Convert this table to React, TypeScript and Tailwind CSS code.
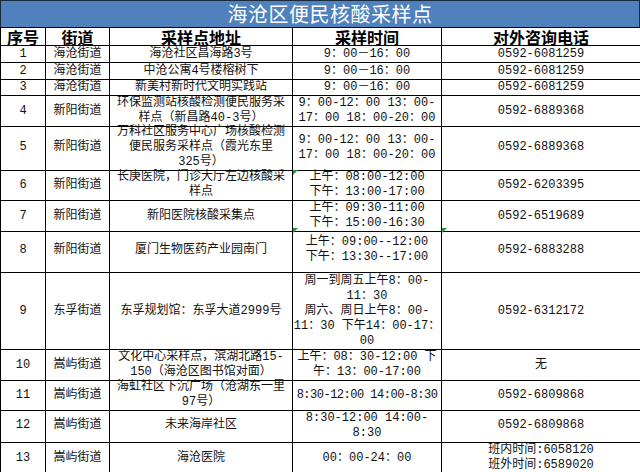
import React from 'react';

type Row = {
  no: string;
  street: string;
  addr: string[];
  time: string[];
  phone: string[];
  h: string;
  mark?: boolean;
  markPhone?: boolean;
  tight?: boolean;
};

const rows: Row[] = [
  { no: '1', street: '海沧街道', addr: ['海沧社区昌海路3号'], time: ['9：00－16：00'], phone: ['0592-6081259'], h: 'h-[17px]' },
  { no: '2', street: '海沧街道', addr: ['中沧公寓4号楼榕树下'], time: ['9：00－16：00'], phone: ['0592-6081259'], h: 'h-[17px]' },
  { no: '3', street: '海沧街道', addr: ['新美村新时代文明实践站'], time: ['9：00－16：00'], phone: ['0592-6081259'], h: 'h-[16px]' },
  { no: '4', street: '新阳街道', addr: ['环保监测站核酸检测便民服务采', '样点（新昌路40-3号）'], time: ['9：00-12：00 13：00-', '17：00 18：00-20：00'], phone: ['0592-6889368'], h: 'h-[29px]' },
  { no: '5', street: '新阳街道', addr: ['万科社区服务中心广场核酸检测', '便民服务采样点（霞光东里', '325号）'], time: ['9：00-12：00 13：00-', '17：00 18：00-20：00'], phone: ['0592-6889368'], h: 'h-[45px]' },
  { no: '6', street: '新阳街道', addr: ['长庚医院，门诊大厅左边核酸采', '样点'], time: ['上午：08:00-12:00', '下午：13:00-17:00'], phone: ['0592-6203395'], h: 'h-[31px]', mark: true },
  { no: '7', street: '新阳街道', addr: ['新阳医院核酸采集点'], time: ['上午：09:30-11:00', '下午：15:00-16:30'], phone: ['0592-6519689'], h: 'h-[27px]' },
  { no: '8', street: '新阳街道', addr: ['厦门生物医药产业园南门'], time: ['上午：09:00--12:00', '下午：13:30--17:00'], phone: ['0592-6883288'], h: 'h-[45px]', mark: true, markPhone: true },
  { no: '9', street: '东孚街道', addr: ['东孚规划馆：东孚大道2999号'], time: ['周一到周五上午8：00-', '11：30', '周六、周日上午8：00-', '11：30 下午14：00-17：', '00'], phone: ['0592-6312172'], h: 'h-[77px]' },
  { no: '10', street: '嵩屿街道', addr: ['文化中心采样点，滨湖北路15-', '150（海沧区图书馆对面）'], time: ['上午：08：30-12:00 下', '午：13：00-17:00'], phone: ['无'], h: 'h-[30px]' },
  { no: '11', street: '嵩屿街道', addr: ['海虹社区下沉广场（沧湖东一里', '97号）'], time: ['8:30-12:00 14:00-8:30'], phone: ['0592-6809868'], h: 'h-[29px]', tight: true },
  { no: '12', street: '嵩屿街道', addr: ['未来海岸社区'], time: ['8:30-12:00 14:00-', '8:30'], phone: ['0592-6809868'], h: 'h-[34px]' },
  { no: '13', street: '嵩屿街道', addr: ['海沧医院'], time: ['00：00-24：00'], phone: ['班内时间:6058120', '班外时间:6589020'], h: 'h-[30px]' },
];

const Cell = ({ items, mark, tight }: { items: string[]; mark?: boolean; tight?: boolean }) => (
  <div className={`relative border-r border-b border-black flex flex-col items-center justify-center ${tight ? 'tracking-[-0.5px]' : ''}`}>
    {mark && (
      <svg className="absolute left-0 top-0" width="5" height="5" viewBox="0 0 5 5">
        <polygon points="0,0 5,0 0,5" fill="#1f9a3a" />
      </svg>
    )}
    {items.map((t, i) => (
      <div key={i} className="h-[15px] leading-[15px] whitespace-nowrap">{t}</div>
    ))}
  </div>
);

const grid = 'grid grid-cols-[45px_64px_183px_149px_199px]';

export default function App() {
  return (
    <div className="w-[640px] h-[472px] bg-white overflow-hidden text-[#111] font-['Liberation_Mono','Noto_Sans_CJK_SC',monospace]">
      <div className="h-[27px] bg-[#4f81bd] border-t border-l border-r border-[#1a2a3a] flex items-center justify-center pl-5">
        <span className="text-white text-[20px] leading-none tracking-[0.5px] font-['Noto_Sans_CJK_SC',sans-serif]">海沧区便民核酸采样点</span>
      </div>
      <div className="border-l border-t border-black text-[12px]">
        <div className={`${grid} h-[18px] text-[16px] font-bold text-black font-['Noto_Sans_CJK_SC',sans-serif]`}>
          {['序号', '街道', '采样点地址', '采样时间', '对外咨询电话'].map((t) => (
            <div key={t} className="border-r border-b border-black flex items-center justify-center leading-none">
              {t}
            </div>
          ))}
        </div>
        {rows.map((r) => (
          <div key={r.no} className={`${grid} ${r.h}`}>
            <Cell items={[r.no]} />
            <Cell items={[r.street]} />
            <Cell items={r.addr} />
            <Cell items={r.time} mark={r.mark} tight={r.tight} />
            <Cell items={r.phone} mark={r.markPhone} />
          </div>
        ))}
      </div>
    </div>
  );
}
